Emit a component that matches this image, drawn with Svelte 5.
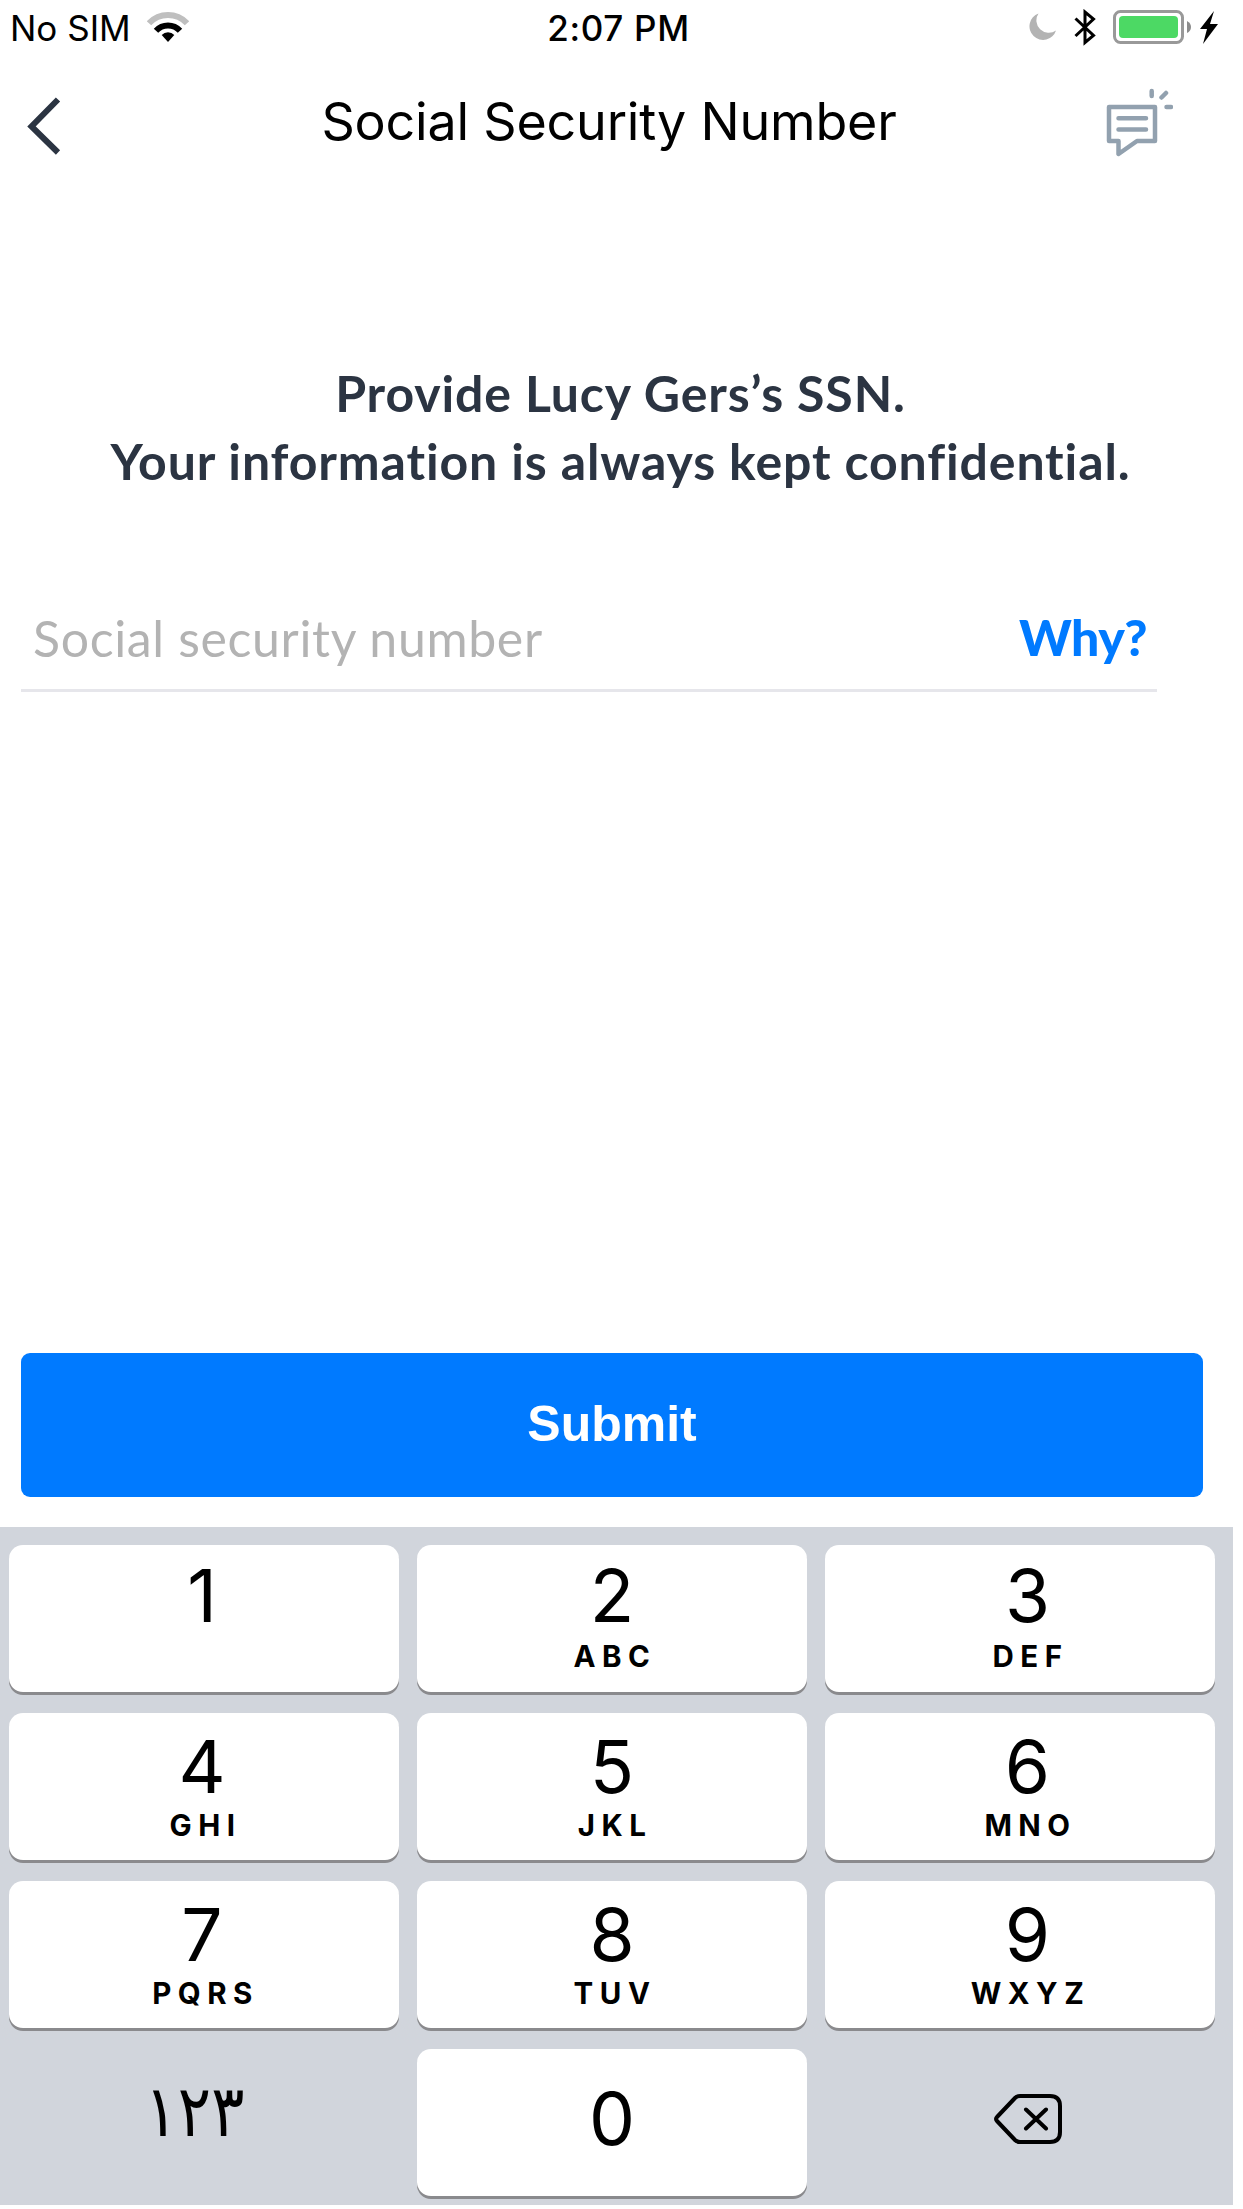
<script>
  const keys = [
    ['1', ''], ['2', 'ABC'], ['3', 'DEF'],
    ['4', 'GHI'], ['5', 'JKL'], ['6', 'MNO'],
    ['7', 'PQRS'], ['8', 'TUV'], ['9', 'WXYZ']
  ];
</script>

<div class="screen">
  <div class="status">
    <div class="left">
      <span class="carrier">No SIM</span>
      <svg class="wifi" width="42" height="30" viewBox="0 0 42 30">
        <path d="M2 11.300A26 26 0 0 1 40 11.300" fill="none" stroke="#bfbfbf" stroke-width="6" />
        <path d="M9 18.700A16.400 16.400 0 0 1 33 18.700" fill="none" stroke="#000" stroke-width="6" />
        <path d="M14.700 23A8.700 8.700 0 0 1 27.300 23L21 30Z" />
      </svg>
    </div>
    <span class="time">2:07 PM</span>
    <svg class="right" width="190" height="38" viewBox="0 0 190 38">
      <path d="M10.500 4.500A13.600 13.600 0 1 0 28 21.500A12.400 12.400 0 0 1 10.500 4.500Z" fill="#b3b3b3" />
      <path d="M47.500 9.500L65.500 26.500L57 33.500V3L65.500 10L47.500 27" fill="none" stroke="#000" stroke-width="3" />
      <rect x="86.500" y="2.500" width="68" height="31" rx="6" fill="#fff" stroke="#999" stroke-width="3" />
      <rect x="91" y="7" width="59" height="22" rx="4" fill="#4cd964" />
      <path d="M159 12Q163 14 163 18T159 24Z" fill="#8c8c8c" />
      <path d="M186 2L172 20H179L175 35L190 15H182Z" />
    </svg>
  </div>
  <header>
    <svg class="back" width="36" height="60" viewBox="0 0 36 60"><path d="M32 2.500L5.500 29.500L32 55.500" fill="none" stroke="#2b3442" stroke-width="6" /></svg>
    <h1>Social Security Number</h1>
    <svg class="chat" width="68" height="70" viewBox="0 0 68 70" fill="none" stroke="#92a1af" stroke-width="4.500" stroke-linecap="round" stroke-linejoin="round">
      <path d="M4 19H50V53H32L13.500 66V53H4Z M13.500 30.300H41 M13.500 41.500H41 M46.700 3V8 M56.500 9.500L61 5 M61.500 19H66" />
    </svg>
  </header>
  <main>
    <p class="l1">Provide Lucy Gers’s SSN.</p>
    <p class="l2">Your information is always kept confidential.</p>
    <div class="field"><span class="ph">Social security number</span><b>Why?</b></div>
  </main>
  <button class="submit">Submit</button>
  <div class="pad">
    {#each keys as [n, l]}
      <div class="key"><span class="n">{n}</span><span class="l">{l}</span></div>
    {/each}
    <div class="key plain"><span class="ar">١٢٣</span></div>
    <div class="key zero"><span class="n">0</span></div>
    <div class="key plain">
      <svg class="del" width="70" height="52" viewBox="0 0 70 52" fill="none" stroke="#000" stroke-width="4" stroke-linecap="round" stroke-linejoin="round">
        <path d="M27 3H57Q67 3 67 13V39Q67 49 57 49H27Q24 49 22 47L4 28Q2 26 4 24L22 5Q24 3 27 3Z M33 16.500L53 35.500 M53 16.500L33 35.500" />
      </svg>
    </div>
  </div>
</div>

<style>
  :global(body) { margin: 0; background: #fff; }
  .screen { width: 1233px; height: 2209px; display: flex; flex-direction: column; font-family: Inter, sans-serif; color: #000; }
  .screen > * { flex: none; box-sizing: border-box; }
  .status { height: 56px; display: grid; grid-template-columns: 1fr auto 1fr; align-items: start; }
  .left { display: flex; gap: 16px; padding: 11px 0 0 10px; }
  .wifi { margin-top: 1px; }
  .carrier { font-size: 35px; line-height: 34px; }
  .time { font-size: 35px; font-weight: 500; line-height: 34px; padding: 11px 0 0 4px; letter-spacing: 0.7px; }
  .right { justify-self: end; margin: 9px 15px 0 0; }
  header { height: 130px; display: grid; grid-template-columns: 68px 1fr 68px; align-items: start; padding: 32px 60px 0 26px; }
  .back { margin-top: 9px; }
  h1 { margin: 2px 0 0 19px; text-align: center; font: 400 52px/64px Inter, sans-serif; letter-spacing: -0.2px; }
  main { height: 1167px; padding-top: 173px; }
  p { margin: 0 0 0 8px; text-align: center; color: #2b3442; font: 700 50px/68px Lato, sans-serif; letter-spacing: 0.88px; }
  .field { box-sizing: border-box; margin: 111px 76px 0 21px; height: 86px; border-bottom: 3px solid #e6e6eb; display: flex; justify-content: space-between; padding: 0 10px 0 12px; font: 400 50px/64px Lato, sans-serif; color: #b3b3b3; }
  .ph { letter-spacing: 0.65px; }
  .field b { color: #007aff; font-weight: 900; line-height: 62px; letter-spacing: -0.5px; }
  .submit { margin: 0 30px 30px 21px; height: 144px; border: 0; border-radius: 9px; background: #007aff; color: #fff; font: 700 50px/142px "Liberation Sans", Arial, sans-serif; padding: 0 0 2px; }
  .pad { background: #d1d5dc; height: 678px; padding: 18px 18px 9px 9px; display: grid; grid-template-columns: repeat(3, 390px); grid-auto-rows: 147px; gap: 21px 18px; align-content: start; }
  .key { box-sizing: border-box; background: #fff; border-radius: 14px; box-shadow: 0 3px #8a8a8d; display: flex; flex-direction: column; align-items: center; }
  .key:nth-child(3n) { padding-left: 15px; }
  .key:nth-child(3n + 1) .n { margin-right: 4px; }
  .key:nth-child(3n + 1) .l { margin-right: 3px; }
  .key:nth-child(n + 4) .n { padding-top: 3px; height: 92px; }
  .plain { background: none; box-shadow: none; }
  .n { font-size: 73px; line-height: 102px; height: 94px; }
  .key.zero .n { padding-top: 19px; }
  .l { font-size: 29.5px; font-weight: 700; letter-spacing: 6.5px; line-height: 35px; padding-left: 6px; }
  .ar { font: 62px/120px "DejaVu Sans", sans-serif; margin: 3px 19px 0 0; transform: scaleY(1.15); }
  .del { margin-top: 44px; }
</style>
